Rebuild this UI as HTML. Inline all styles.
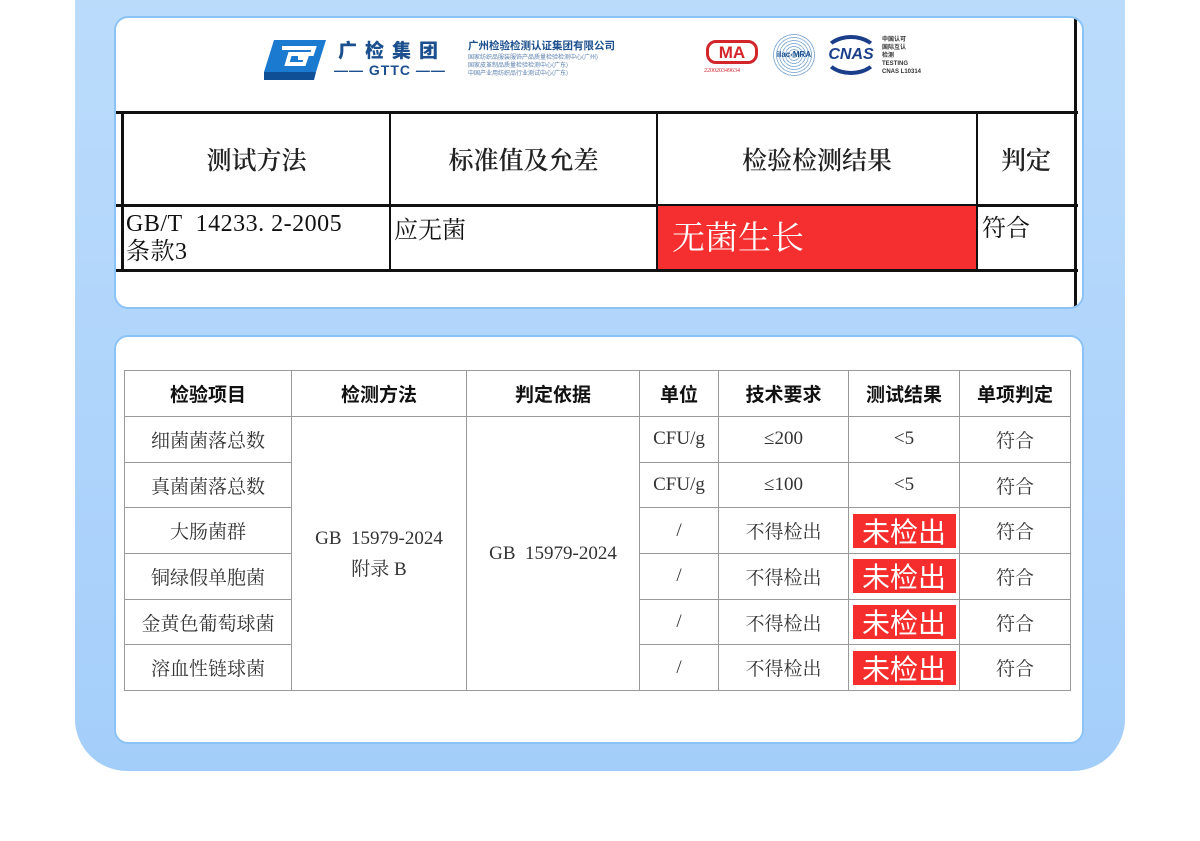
<!DOCTYPE html>
<html><head><meta charset="utf-8"><style>
*{margin:0;padding:0;box-sizing:border-box}
body{width:1200px;height:841px;background:#fff;position:relative;overflow:hidden;font-family:"Liberation Serif","Noto Serif CJK SC",serif}
.panel{position:absolute;left:75px;top:-40px;width:1050px;height:811px;border-radius:0 0 52px 52px;background:linear-gradient(180deg,#bcdcfb 0%,#aed4fb 60%,#a4cefa 100%)}
.card{position:absolute;left:114px;width:970px;background:#fff;border:2px solid #8cc3f6;border-radius:14px;overflow:hidden}
.a{position:absolute}
.t1 .l{position:absolute;background:#111}
.hd{font-family:"Noto Serif CJK SC",serif;font-weight:600;font-size:25px;color:#222;position:absolute;text-align:center}
table{position:absolute;left:8px;top:33px;border-collapse:collapse;font-family:"Liberation Serif","Noto Serif CJK SC",serif;font-size:19px;color:#333}
td,th{border:1px solid #999;text-align:center;height:45.7px;padding:0;vertical-align:middle}
th{font-family:"Noto Sans CJK SC",sans-serif;font-weight:700;font-size:19px;color:#111;height:46px}
.r{display:inline-block;background:#f52d2d;color:#fff;font-size:28px;width:103px;height:34px;line-height:34px;font-family:"Noto Sans CJK SC",sans-serif;vertical-align:middle}
</style></head><body>
<div class="panel"></div>
<div class="card t1" style="top:16px;height:293px;">
  <svg class="a" style="left:148px;top:20px" width="66" height="46" viewBox="0 0 66 46"><polygon points="10,2 62,2 52,34 0,34" fill="#1a7ad0"/><polygon points="0,34 52,34 50,42 -2,42" fill="#0f4f95"/><path d="M18,10 H50 L48,16 H26 L23,26 H40 L42,20 H34" stroke="#fff" stroke-width="4" fill="none"/></svg>
  <div class="a" style="left:222px;top:18px;font-family:'Noto Sans CJK SC',sans-serif;font-weight:900;font-size:19px;letter-spacing:8px;color:#1b4f8e">广检集团</div>
  <div class="a" style="left:218px;top:44px;font-family:'Liberation Sans',sans-serif;font-weight:700;font-size:14px;color:#1b4f8e;letter-spacing:1px">—— GTTC ——</div>
  <div class="a" style="left:352px;top:20px;font-family:'Noto Sans CJK SC',sans-serif;font-weight:700;font-size:10.5px;color:#1b4f8e">广州检验检测认证集团有限公司</div>
  <div class="a" style="left:352px;top:35px;font-family:'Noto Sans CJK SC',sans-serif;font-size:6px;line-height:8px;color:#5a7fae">国家纺织品服装服饰产品质量检验检测中心(广州)<br>国家皮革制品质量检验检测中心(广东)<br>中国产业用纺织品行业测试中心(广东)</div>
  <div class="a" style="left:590px;top:22px;width:52px;height:24px;border:3px solid #d3262b;border-radius:10px;color:#d3262b;font:700 17px 'Liberation Sans',sans-serif;text-align:center;line-height:19px">MA</div>
  <div class="a" style="left:588px;top:50px;font-size:6px;color:#d3262b">220020349634</div>
  <div class="a" style="left:656px;top:15px;width:44px;height:44px;border-radius:50%;background:repeating-radial-gradient(#fff 0 2px,#8fb4d8 2px 3px);font:700 8px 'Liberation Sans',sans-serif;color:#1b4f8e;text-align:center;line-height:44px">ilac-MRA</div>
  <div class="a" style="left:707px;top:17px;width:56px;height:40px;border-radius:50%;border:4px solid #1b3e8a;font:italic 700 16px 'Liberation Sans',sans-serif;color:#1b3e8a;text-align:center;line-height:32px;border-left-color:transparent;border-right-color:transparent">CNAS</div>
  <div class="a" style="left:766px;top:18px;font:700 6px/8px 'Liberation Sans','Noto Sans CJK SC',sans-serif;color:#333">中国认可<br>国际互认<br>检测<br>TESTING<br>CNAS L10314</div>
  <div class="a" style="left:1040px;top:-20px;width:90px;height:90px;border:3px solid #e35a5a;border-radius:50%;opacity:.8"></div>
  <div class="l" style="left:0;top:93px;width:962px;height:3px"></div>
  <div class="l" style="left:0;top:186px;width:962px;height:3px"></div>
  <div class="l" style="left:0;top:251px;width:962px;height:3px"></div>
  <div class="l" style="left:5px;top:94px;width:3px;height:159px"></div>
  <div class="l" style="left:273px;top:94px;width:2px;height:159px"></div>
  <div class="l" style="left:540px;top:94px;width:2px;height:159px"></div>
  <div class="l" style="left:860px;top:94px;width:2px;height:159px"></div>
  <div class="l" style="left:958px;top:0;width:3px;height:293px"></div>
  <div class="a" style="left:542px;top:188px;width:318px;height:63px;background:#f52f2f"></div>
  <div class="hd" style="left:8px;top:123px;width:265px">测试方法</div>
  <div class="hd" style="left:275px;top:123px;width:265px">标准值及允差</div>
  <div class="hd" style="left:542px;top:123px;width:318px">检验检测结果</div>
  <div class="hd" style="left:862px;top:123px;width:96px">判定</div>
  <div class="a" style="left:10px;top:192px;font-size:24px;line-height:28px;color:#111;letter-spacing:0.5px">GB/T&nbsp; 14233. 2-2005<br>条款3</div>
  <div class="a" style="left:278px;top:192px;font-size:24px;color:#111">应无菌</div>
  <div class="a" style="left:556px;top:194px;font-size:33px;color:#fff">无菌生长</div>
  <div class="a" style="left:866px;top:190px;font-size:24px;color:#111">符合</div>
</div>
<div class="card" style="top:335px;height:409px;">
<table>
<tr><th style="width:167px">检验项目</th><th style="width:175px">检测方法</th><th style="width:173px">判定依据</th><th style="width:79px">单位</th><th style="width:130px">技术要求</th><th style="width:111px">测试结果</th><th style="width:111px">单项判定</th></tr>
<tr><td>细菌菌落总数</td><td rowspan="6" style="line-height:31px">GB&nbsp; 15979-2024<br>附录 B</td><td rowspan="6">GB&nbsp; 15979-2024</td><td>CFU/g</td><td>≤200</td><td>&lt;5</td><td>符合</td></tr>
<tr><td>真菌菌落总数</td><td>CFU/g</td><td>≤100</td><td>&lt;5</td><td>符合</td></tr>
<tr><td>大肠菌群</td><td>/</td><td>不得检出</td><td><span class="r">未检出</span></td><td>符合</td></tr>
<tr><td>铜绿假单胞菌</td><td>/</td><td>不得检出</td><td><span class="r">未检出</span></td><td>符合</td></tr>
<tr><td>金黄色葡萄球菌</td><td>/</td><td>不得检出</td><td><span class="r">未检出</span></td><td>符合</td></tr>
<tr><td>溶血性链球菌</td><td>/</td><td>不得检出</td><td><span class="r">未检出</span></td><td>符合</td></tr>
</table>
</div>
</body></html>
